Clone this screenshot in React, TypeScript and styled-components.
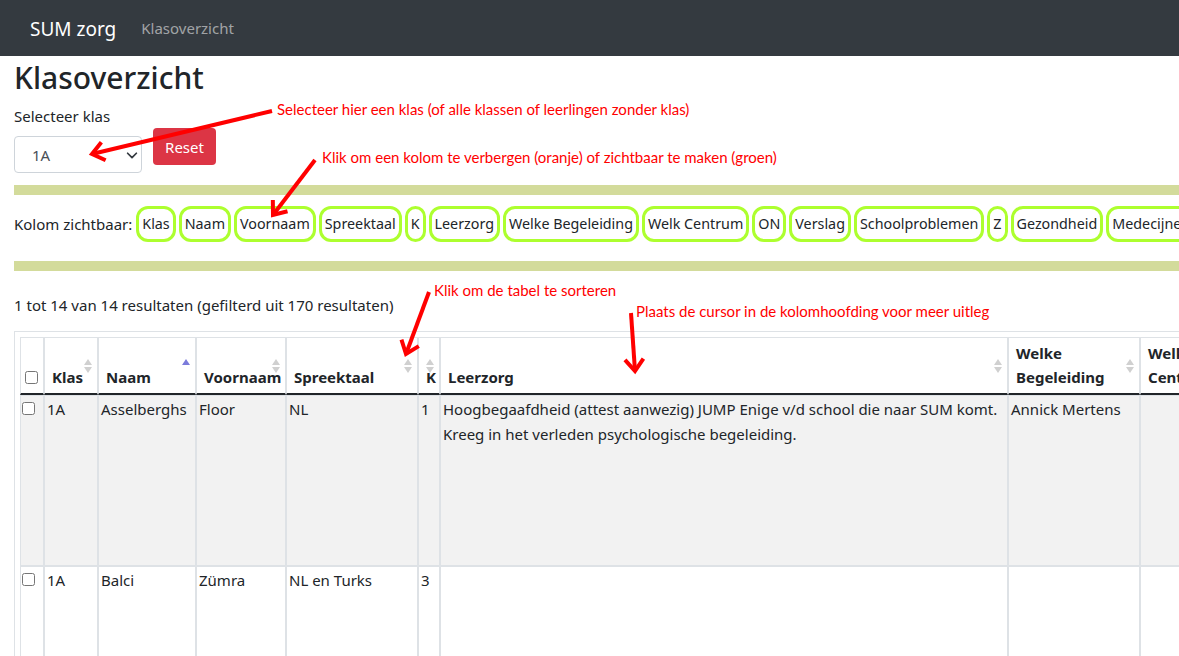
import React from "react";
import styled, { createGlobalStyle } from "styled-components";

const GlobalStyle = createGlobalStyle`
  html, body {
    margin: 0;
    padding: 0;
    overflow: hidden;
    background: #ffffff;
  }
  body {
    font-family: "Noto Sans", "Open Sans", sans-serif;
    color: #212529;
  }
  * { box-sizing: border-box; }
`;

const Page = styled.div`
  position: relative;
  width: 1179px;
  height: 656px;
  overflow: hidden;
`;

const Navbar = styled.nav`
  display: flex;
  align-items: center;
  height: 56px;
  padding: 0 30px;
  background: #343a40;
`;

const Brand = styled.span`
  font-size: 19px;
  color: #ffffff;
  margin-right: 25px;
  margin-top: 2px;
`;

const NavLink = styled.span`
  font-size: 15px;
  color: rgba(255, 255, 255, 0.55);
`;

const Main = styled.main`
  padding-left: 14px;
`;

const Title = styled.h1`
  margin: 4px 0 0;
  font-size: 30px;
  line-height: 36px;
  font-weight: 500;
`;

const Label = styled.div`
  margin-top: 8px;
  font-size: 15px;
  line-height: 24px;
`;

const FilterRow = styled.div`
  display: flex;
  align-items: flex-start;
  gap: 11px;
`;

const SelectBox = styled.div`
  display: flex;
  align-items: center;
  justify-content: space-between;
  width: 128px;
  height: 37px;
  margin-top: 8px;
  padding: 0 2px 0 17px;
  border: 1px solid #ced4da;
  border-radius: 4px;
  font-size: 15px;
  color: #495057;
`;

const ResetButton = styled.button`
  width: 63px;
  height: 37px;
  border: none;
  border-radius: 4px;
  background: #dc3545;
  color: #ffffff;
  font-family: inherit;
  font-size: 15px;
  padding: 0;
`;

const Divider = styled.div<{ $top: number }>`
  height: 10px;
  margin-top: ${(p) => p.$top}px;
  background: #d3db9b;
  width: 1200px;
`;

const ToggleRow = styled.div`
  display: flex;
  flex-wrap: nowrap;
  align-items: center;
  height: 66px;
  padding-bottom: 8px;
  gap: 3px;
  white-space: nowrap;
`;

const ToggleLabel = styled.span`
  font-size: 15px;
  margin-right: 1px;
  flex-shrink: 0;
`;

const Pill = styled.span`
  flex-shrink: 0;
  height: 36px;
  padding: 3px 3px;
  border: 3px solid #adff2f;
  border-radius: 12px;
  font-size: 14.3px;
  line-height: 24px;
`;

const ResultInfo = styled.div`
  margin-top: 22px;
  font-size: 15px;
  line-height: 24px;
`;

const TableFrame = styled.div`
  margin-top: 14px;
  width: max-content;
  padding: 5px;
  border: 1px solid #dee2e6;
  border-right: none;
`;

const Table = styled.table<{ $width: number }>`
  table-layout: fixed;
  border-collapse: separate;
  border-spacing: 0;
  width: ${(p) => p.$width}px;
`;

const HeadCell = styled.th<{ $sort?: "none" | "asc" }>`
  position: relative;
  height: 58px;
  padding: 0 18px 4px 7px;
  border: 1px solid #dee2e6;
  border-bottom: 2px solid #212529;
  vertical-align: bottom;
  text-align: left;
  font-size: 15px;
  line-height: 24px;
  font-weight: 700;
  color: #212529;
  overflow: visible;
  white-space: normal;

  &::before,
  &::after {
    content: "";
    position: absolute;
    right: 5px;
    width: 0;
    height: 0;
    border-left: 4.5px solid transparent;
    border-right: 4.5px solid transparent;
    display: block;
  }
  &::before {
    top: 21px;
    border-bottom: 6px solid ${(p) => (p.$sort === "asc" ? "#7b7bdb" : "#d0d0d0")};
  }
  &::after {
    top: 29px;
    border-top: 6px solid #d0d0d0;
    display: ${(p) => (p.$sort === "asc" ? "none" : "block")};
  }
`;

const CheckHead = styled.th`
  height: 58px;
  padding: 0 0 9px 4px;
  border: 1px solid #dee2e6;
  border-bottom: 2px solid #212529;
  vertical-align: bottom;
  text-align: left;
`;

const Row = styled.tr<{ $shade?: boolean; $height: number }>`
  height: ${(p) => p.$height}px;
  background: ${(p) => (p.$shade ? "#f2f2f2" : "#ffffff")};
`;

const Cell = styled.td`
  padding: 1px 2px;
  border: 1px solid #dee2e6;
  vertical-align: top;
  font-size: 15px;
  line-height: 25px;
  color: #212529;
  white-space: nowrap;
  overflow: visible;
`;

const CheckCell = styled.td`
  padding: 6px 0 0 1px;
  border: 1px solid #dee2e6;
  vertical-align: top;
`;

const CheckBox = styled.input`
  width: 13px;
  height: 13px;
  margin: 0;
  display: block;
`;

const Note = styled.div<{ $x: number; $y: number }>`
  position: absolute;
  left: ${(p) => p.$x}px;
  top: ${(p) => p.$y}px;
  font-family: "Lato", "Noto Sans", sans-serif;
  font-size: 15px;
  line-height: 18px;
  color: #ff0000;
  white-space: nowrap;
`;

const ArrowLayer = styled.svg`
  position: absolute;
  left: 0;
  top: 0;
  pointer-events: none;
`;

type Arrow = { from: [number, number]; to: [number, number] };

const arrows: Arrow[] = [
  { from: [272, 111], to: [92, 154] },
  { from: [315, 160], to: [273, 215] },
  { from: [429, 292], to: [406, 354] },
  { from: [631, 313], to: [635, 371] },
];

function arrowHead(a: Arrow): string {
  const [tx, ty] = a.to;
  const dx = a.from[0] - tx;
  const dy = a.from[1] - ty;
  const len = Math.hypot(dx, dy);
  const ux = dx / len;
  const uy = dy / len;
  const L = 15;
  const ang = (38 * Math.PI) / 180;
  const c = Math.cos(ang);
  const s = Math.sin(ang);
  const p1 = [tx + L * (ux * c - uy * s), ty + L * (ux * s + uy * c)];
  const p2 = [tx + L * (ux * c + uy * s), ty + L * (-ux * s + uy * c)];
  return `${p1[0]},${p1[1]} ${tx},${ty} ${p2[0]},${p2[1]}`;
}

const toggles = [
  "Klas",
  "Naam",
  "Voornaam",
  "Spreektaal",
  "K",
  "Leerzorg",
  "Welke Begeleiding",
  "Welk Centrum",
  "ON",
  "Verslag",
  "Schoolproblemen",
  "Z",
  "Gezondheid",
  "Medecijnen",
];

const colWidths = [24, 54, 98, 90, 132, 22, 568, 132, 108];
const tableWidth = colWidths.reduce((a, b) => a + b, 0);

export default function App() {
  return (
    <Page>
      <GlobalStyle />
      <Navbar>
        <Brand>SUM zorg</Brand>
        <NavLink>Klasoverzicht</NavLink>
      </Navbar>
      <Main>
        <Title>Klasoverzicht</Title>
        <Label>Selecteer klas</Label>
        <FilterRow>
          <SelectBox>
            <span>1A</span>
            <svg width="14" height="14" viewBox="0 0 16 16">
              <path
                d="M3 6l5 5 5-5"
                fill="none"
                stroke="#343a40"
                strokeWidth="2"
                strokeLinecap="round"
                strokeLinejoin="round"
              />
            </svg>
          </SelectBox>
          <ResetButton>Reset</ResetButton>
        </FilterRow>
        <Divider $top={12} />
        <ToggleRow>
          <ToggleLabel>Kolom zichtbaar:</ToggleLabel>
          {toggles.map((t) => (
            <Pill key={t}>{t}</Pill>
          ))}
        </ToggleRow>
        <Divider $top={0} />
        <ResultInfo>1 tot 14 van 14 resultaten (gefilterd uit 170 resultaten)</ResultInfo>
        <TableFrame>
          <Table $width={tableWidth}>
            <colgroup>
              {colWidths.map((w, i) => (
                <col key={i} style={{ width: w }} />
              ))}
            </colgroup>
            <thead>
              <tr>
                <CheckHead>
                  <CheckBox type="checkbox" />
                </CheckHead>
                <HeadCell $sort="none">Klas</HeadCell>
                <HeadCell $sort="asc">Naam</HeadCell>
                <HeadCell $sort="none">Voornaam</HeadCell>
                <HeadCell $sort="none">Spreektaal</HeadCell>
                <HeadCell $sort="none">K</HeadCell>
                <HeadCell $sort="none">Leerzorg</HeadCell>
                <HeadCell $sort="none">Welke Begeleiding</HeadCell>
                <HeadCell $sort="none">Welk Centrum</HeadCell>
              </tr>
            </thead>
            <tbody>
              <Row $shade $height={171}>
                <CheckCell>
                  <CheckBox type="checkbox" />
                </CheckCell>
                <Cell>1A</Cell>
                <Cell>Asselberghs</Cell>
                <Cell>Floor</Cell>
                <Cell>NL</Cell>
                <Cell>1</Cell>
                <Cell>
                  Hoogbegaafdheid (attest aanwezig) JUMP Enige v/d school die naar SUM komt.
                  <br />
                  Kreeg in het verleden psychologische begeleiding.
                </Cell>
                <Cell>Annick Mertens</Cell>
                <Cell></Cell>
              </Row>
              <Row $height={171}>
                <CheckCell>
                  <CheckBox type="checkbox" />
                </CheckCell>
                <Cell>1A</Cell>
                <Cell>Balci</Cell>
                <Cell>Zümra</Cell>
                <Cell>NL en Turks</Cell>
                <Cell>3</Cell>
                <Cell></Cell>
                <Cell></Cell>
                <Cell></Cell>
              </Row>
            </tbody>
          </Table>
        </TableFrame>
      </Main>

      <Note $x={277} $y={100}>
        Selecteer hier een klas (of alle klassen of leerlingen zonder klas)
      </Note>
      <Note $x={322} $y={148}>
        Klik om een kolom te verbergen (oranje) of zichtbaar te maken (groen)
      </Note>
      <Note $x={434} $y={281}>
        Klik om de tabel te sorteren
      </Note>
      <Note $x={636} $y={302}>
        Plaats de cursor in de kolomhoofding voor meer uitleg
      </Note>

      <ArrowLayer width="1179" height="656" viewBox="0 0 1179 656">
        {arrows.map((a, i) => (
          <g key={i} stroke="#ff0000" strokeWidth="4" fill="none" strokeLinecap="butt">
            <line x1={a.from[0]} y1={a.from[1]} x2={a.to[0]} y2={a.to[1]} />
            <polyline points={arrowHead(a)} strokeLinejoin="miter" />
          </g>
        ))}
      </ArrowLayer>
    </Page>
  );
}
